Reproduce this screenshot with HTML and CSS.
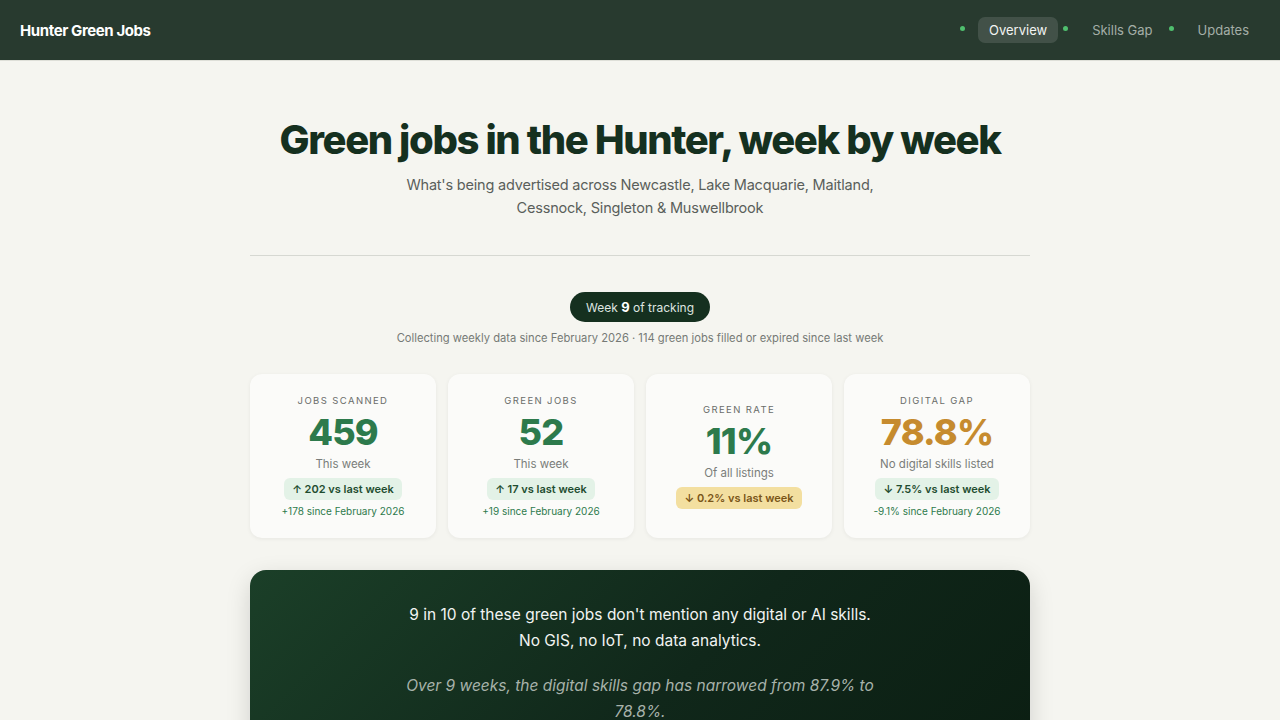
FILE: index.html
```html
<!DOCTYPE html>
<html lang="en">
<head>
<meta charset="utf-8">
<title>Hunter Green Jobs</title>
<link rel="stylesheet" href="styles.css">
</head>
<body>
<header class="nav">
  <div class="brand">Hunter Green Jobs</div>
  <nav class="links">
    <div class="item"><span class="dot"></span><a class="link active">Overview</a></div>
    <div class="item"><span class="dot"></span><a class="link">Skills Gap</a></div>
    <div class="item"><span class="dot"></span><a class="link">Updates</a></div>
  </nav>
</header>
<main class="page">
  <section class="hero">
    <h1>Green jobs in the Hunter, week by week</h1>
    <p class="sub">What's being advertised across Newcastle, Lake Macquarie, Maitland,<br>Cessnock, Singleton &amp; Muswellbrook</p>
  </section>
  <hr class="rule">
  <section class="tracking">
    <div class="pill">Week <b>9</b> of tracking</div>
    <p class="note">Collecting weekly data since February 2026 · 114 green jobs filled or expired since last week</p>
  </section>
  <section class="cards">
    <div class="card">
      <div class="label">JOBS SCANNED</div>
      <div class="value">459</div>
      <div class="desc">This week</div>
      <div class="badge good">↑ 202 vs last week</div>
      <div class="since">+178 since February 2026</div>
    </div>
    <div class="card">
      <div class="label">GREEN JOBS</div>
      <div class="value">52</div>
      <div class="desc">This week</div>
      <div class="badge good">↑ 17 vs last week</div>
      <div class="since">+19 since February 2026</div>
    </div>
    <div class="card">
      <div class="label">GREEN RATE</div>
      <div class="value">11%</div>
      <div class="desc">Of all listings</div>
      <div class="badge warn">↓ 0.2% vs last week</div>
    </div>
    <div class="card">
      <div class="label">DIGITAL GAP</div>
      <div class="value amber">78.8%</div>
      <div class="desc">No digital skills listed</div>
      <div class="badge good">↓ 7.5% vs last week</div>
      <div class="since">-9.1% since February 2026</div>
    </div>
  </section>
  <section class="panel">
    <p class="lead">9 in 10 of these green jobs don't mention any digital or AI skills.<br>No GIS, no IoT, no data analytics.</p>
    <p class="trend">Over 9 weeks, the digital skills gap has narrowed from 87.9% to 78.8%.</p>
  </section>
</main>
</body>
</html>
```

FILE: styles.css
```css
* { box-sizing: border-box; }
html, body { margin: 0; padding: 0; }
body {
  background: #f5f5f0;
  font-family: Inter, "Noto Sans", "Liberation Sans", sans-serif;
  color: #1f2a22;
}
.nav {
  height: 61px;
  background: #283a2f;
  border-bottom: 1px solid #dedfd8;
  display: flex;
  align-items: center;
  justify-content: space-between;
  padding: 0 20px;
}
.brand {
  color: #fff;
  font-weight: 700;
  font-size: 15px;
  letter-spacing: -0.4px;
}
.links { display: flex; align-items: center; gap: 5px; }
.item { display: flex; align-items: center; }
.dot {
  width: 5px; height: 5px; border-radius: 50%;
  background: #4fbf6e;
  margin-right: 13px;
  position: relative; top: -2px;
}
.link {
  color: #a4aea7;
  font-size: 13px;
  padding: 5px 11px;
  border-radius: 7px;
  line-height: 16px;
}
.link.active {
  color: #f2f4f2;
  background: rgba(255,255,255,0.12);
}
.page {
  width: 780px;
  margin: 0 auto;
}
.hero { text-align: center; padding-top: 56px; }
h1 {
  margin: 0;
  font-size: 40px;
  line-height: 46px;
  font-weight: 800;
  letter-spacing: -1.4px;
  color: #15301f;
}
.sub {
  margin: 10px 0 0;
  font-size: 14.5px;
  letter-spacing: -0.2px;
  line-height: 23px;
  color: #5a5f5b;
}
.rule {
  margin: 36px 0 0;
  border: 0;
  border-top: 1px solid #d6d8d2;
}
.tracking { text-align: center; padding-top: 36px; }
.pill {
  display: inline-block;
  background: #15301f;
  color: #dfe6e0;
  font-size: 12px;
  line-height: 30px;
  height: 30px;
  padding: 0 16px;
  border-radius: 15px;
}
.pill b { color: #fff; font-size: 13px; }
.note {
  margin: 9px 0 0;
  font-size: 11.2px;
  color: #767a76;
}
.cards {
  margin-top: 29px;
  display: grid;
  grid-template-columns: repeat(4, 1fr);
  gap: 12px;
}
.card {
  height: 164px;
  background: #fbfbf9;
  border-radius: 12px;
  box-shadow: 0 1px 4px rgba(0,0,0,0.06);
  display: flex;
  flex-direction: column;
  align-items: center;
  justify-content: center;
  text-align: center;
}
.label {
  font-size: 9.5px;
  letter-spacing: 1.4px;
  color: #6a6d6a;
}
.value {
  font-size: 36px;
  line-height: 42px;
  font-weight: 800;
  letter-spacing: -0.8px;
  color: #2d7a4c;
  margin-top: 5px;
}
.value.amber { color: #c68b2e; }
.desc {
  font-size: 11.5px;
  color: #7a7d7a;
  margin-top: 4px;
}
.badge {
  margin-top: 7px;
  font-size: 11px;
  font-weight: 600;
  height: 22px;
  line-height: 22px;
  padding: 0 8px;
  border-radius: 6px;
}
.badge.good { background: #e3f2e7; color: #1f4d30; }
.badge.warn { background: #f3dfa0; color: #7a5518; }
.since {
  margin-top: 5px;
  font-size: 10px;
  color: #2d7a4c;
}
.panel {
  margin-top: 32px;
  height: 200px;
  border-radius: 16px;
  background: linear-gradient(135deg, #1b3f28 0%, #10271a 55%, #0b1e12 100%);
  box-shadow: 0 8px 24px rgba(0,0,0,0.15);
  text-align: center;
  padding: 32px 150px 0;
}
.lead {
  margin: 0;
  color: #f2f4f2;
  font-size: 15.5px;
  line-height: 26px;
}
.trend {
  margin: 19px 0 0;
  color: #a7b2aa;
  font-style: italic;
  font-size: 15.5px;
  line-height: 26px;
}
```
